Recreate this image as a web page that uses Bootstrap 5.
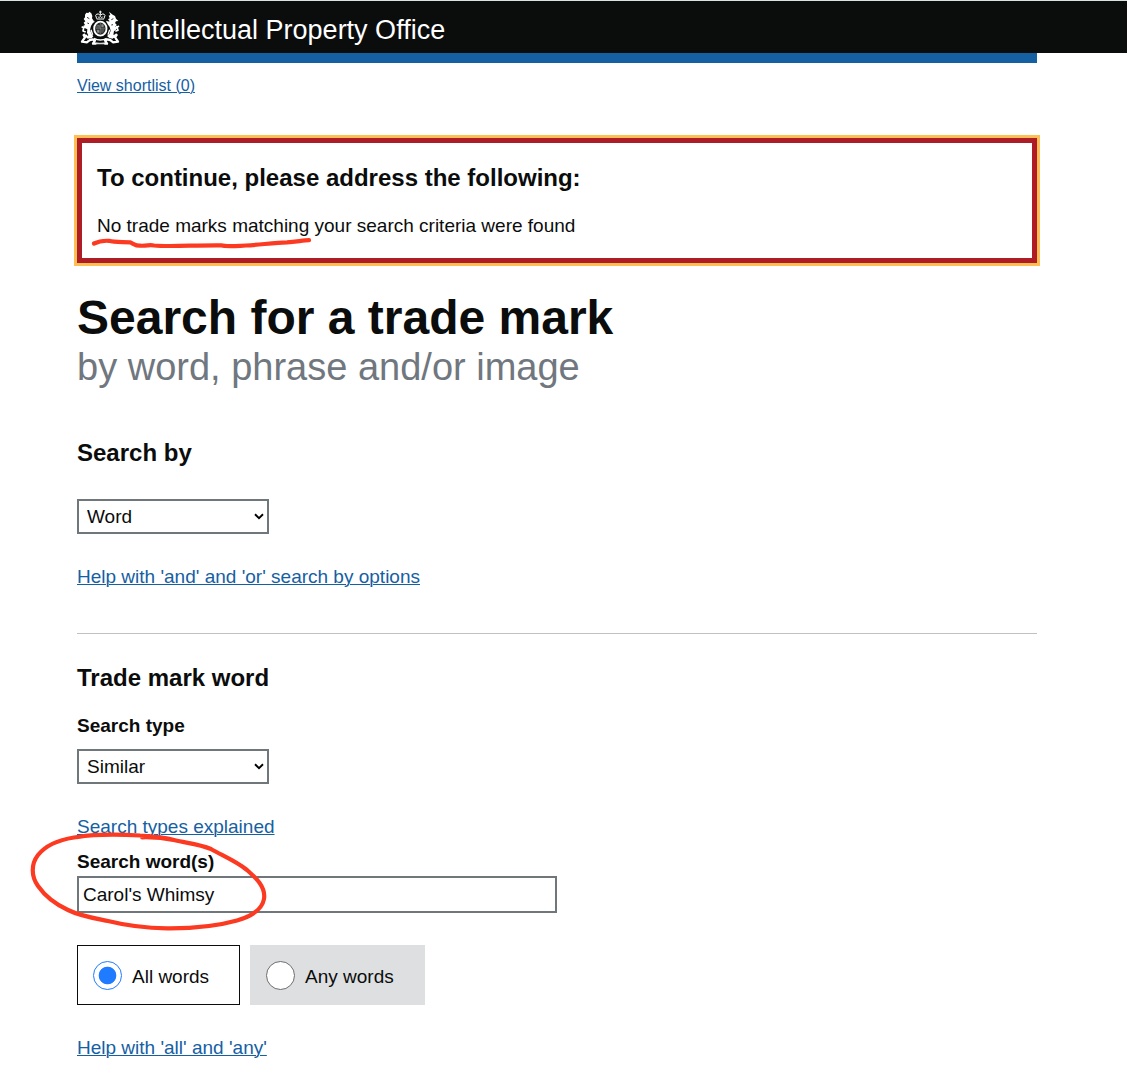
<!DOCTYPE html>
<html lang="en">
<head>
<meta charset="utf-8">
<meta name="viewport" content="width=device-width, initial-scale=1">
<title>Search for a trade mark - Intellectual Property Office</title>
<link href="https://cdn.jsdelivr.net/npm/bootstrap@5.3.0/dist/css/bootstrap.min.css" rel="stylesheet">
<style>
body{font-family:"Liberation Sans",Arial,sans-serif;font-size:19px;line-height:24px;color:#0b0c0c;background:#fff;height:1082px;overflow:hidden}
.ipo-wrap{width:960px;margin-left:77px}
.ipo-head{height:53px;background:#0b0c0c;border-top:1px solid #dbe3de}
.ipo-name{font-size:27px;line-height:32px;margin:13px 0 0 8px}
.crest{margin:9px 0 0 3px;width:41px;height:36px;flex:none}
.ipo-bar{height:10px;background:#1560a3}
.ipo-link{display:table;color:#1560a3;text-decoration:underline;text-decoration-thickness:1px;text-underline-offset:1px;margin-top:31px}
.ipo-link.shortlist{font-size:16px;line-height:20px;margin-top:13px}
.err-box{margin-top:42px;height:125px;border:5px solid #ae1c25;outline:3px solid #ffbf54;padding:21px 15px 0}
.err-text{margin:22px 0 0}
.h-md{font-size:24px;line-height:28px;font-weight:700;margin:30px 0 0}
.err-box .h-md{margin-top:0}
.h-xl{font-size:48px;line-height:50px;font-weight:700;margin:30px 0 0}
.h-sub{display:block;font-size:38px;line-height:46px;font-weight:400;color:#70777e;margin-top:1px}
.h-xl + .h-md{margin-top:49px}
.sel-box{display:block;width:192px;height:35px;border:2px solid #6f777b;border-radius:0;padding:0 0 0 8px;font-size:19px;line-height:24px;color:#0b0c0c;background:#fff;background-image:url("data:image/svg+xml,%3Csvg xmlns='http://www.w3.org/2000/svg' width='10' height='7'%3E%3Cpath d='M1 1.2 5 5.1 9 1.2' fill='none' stroke='%23000' stroke-width='1.9'/%3E%3C/svg%3E");background-repeat:no-repeat;background-position:175px 12px;background-size:10px 7px}
.h-md + .sel-box{margin-top:32px}
.lbl + .sel-box{margin-top:11px}
.rule{height:1px;background:#bfc1c3;margin-top:44px}
.lbl{display:block;font-weight:700;margin-top:22px}
.ipo-link + .lbl{margin-top:11px}
.txt-box{width:480px;height:37px;border:2px solid #6f777b;border-radius:0;padding:0 4px;font-size:19px;line-height:24px;color:#0b0c0c;display:block;margin-top:2px}
.opts{margin-top:32px;gap:10px}
.opt{height:60px;width:175px;background:#dedfe1;border:1px solid #dedfe1;padding:2px 0 0 15px}
.opt input{appearance:none;width:29px;height:29px;border:1px solid #6c6c6c;border-radius:50%;background:#fff;margin:-2px 10px 0 0;flex:none}
.opt span{padding-top:1px}
.opt.on{width:163px;background:#fff;border-color:#0b0c0c}
.opt.on input{border-color:#1f7bff;background:radial-gradient(circle,#1f7bff 8.4px,#fff 9.2px)}
.ink{left:0;top:0;pointer-events:none}
</style>
</head>
<body class="position-relative">
<header class="ipo-head">
  <div class="ipo-wrap d-flex align-items-start text-white">
    <svg class="crest" viewBox="30 27 123 108" aria-hidden="true">
      <!-- lion, unicorn, crown -->
      <path fill="#fff" d="M45 41l4-6 6 1 3-4 6 5 3 8-1 7 5 7-3 8-5 8-3 12 5 12 5 7-5 6-13 1-4-5 7-5-4-8 1-10-8-4-5-6 6-3-4-7 5-4-5-7 4-5z"/>
      <path fill="#fff" d="M117 32l11 9 7 4 3 8 7 7-7 1-3 5 5 5-4 6 8 2-7 8-5 4-2 10 5 7-7 5-10-2-7-6 7-5 4-11-3-11-6-8-3-7 9-2-5-6 5-3-3-8 5-2z"/>
      <g stroke="#fff" fill="none" stroke-linejoin="round">
        <path stroke-width="3" d="M80 53L77 43q2-5 8-4l6 4 6-4q6-1 8 4l-3 10M80 54h22M91 29v14M87 33h8"/>
        <path stroke-width="2" d="M84 46l3 5 4-6 4 6 4-5"/>
        <path stroke-width="5" d="M47 93l-8-3 2-9-6-4M39 81l6-3M136 91l8-3-3-9 6-4M143 79l-5-3"/>
        <path stroke-width="7" d="M52 105q-7 1-12-6M40 100l5 9-9 13 15 2q12-13 24-6l-6 10h42l-6-10q12-7 24 6l15-2-9-13 6-9M129 105q7 1 12-6"/>
        <path stroke-width="4" d="M72 112q19 10 38 0M64 66l9-5M118 66l-9-5M63 86l5 15M119 86l-5 15"/>
      </g>
      <!-- garter and shield -->
      <ellipse cx="91" cy="83" rx="23" ry="26" fill="#0b0c0c"/>
      <ellipse cx="91" cy="83" rx="18.500" ry="21" fill="#292a2a" stroke="#fff" stroke-width="5.500"/>
      <path d="M79 72h11v9H78zM93 84h10l-3 11h-7z" fill="#505151"/>
      <path d="M94 70h7v9h-7zM80 86h8v9h-6z" fill="#858686"/>
      <path d="M91 65v34M77 82h28M82 71l6 6M84 91l5 2" stroke="#a0a1a1" stroke-width="1.500" fill="none"/>
      <path d="M51 49l7 4M52 66l5 2M130 53l-6 3M129 71l-5 1M48 113l8 3M134 113l-8 3M80 122q11 4 22 0M79 130h24" stroke="#0b0c0c" stroke-width="2.500" fill="none"/>
    </svg>
    <div class="ipo-name">Intellectual Property Office</div>
  </div>
</header>
<main class="ipo-wrap">
  <div class="ipo-bar"></div>
  <a href="#" class="ipo-link shortlist">View shortlist (0)</a>

  <section class="err-box" role="alert">
    <h2 class="h-md">To continue, please address the following:</h2>
    <p class="err-text">No trade marks matching your search criteria were found</p>
  </section>

  <h1 class="h-xl">Search for a trade mark<span class="h-sub">by word, phrase and/or image</span></h1>

  <h2 class="h-md">Search by</h2>
  <select class="form-select sel-box" aria-label="Search by"><option>Word</option></select>
  <a href="#" class="ipo-link">Help with 'and' and 'or' search by options</a>
  <div class="rule"></div>

  <h2 class="h-md">Trade mark word</h2>
  <label class="lbl" for="type">Search type</label>
  <select id="type" class="form-select sel-box"><option>Similar</option></select>
  <a href="#" class="ipo-link">Search types explained</a>
  <label class="lbl" for="words">Search word(s)</label>
  <input id="words" class="form-control txt-box" type="text" value="Carol's Whimsy">

  <div class="d-flex opts">
    <label class="opt on d-flex align-items-center"><input type="radio" name="m" checked><span>All words</span></label>
    <label class="opt d-flex align-items-center"><input type="radio" name="m"><span>Any words</span></label>
  </div>
  <a href="#" class="ipo-link">Help with 'all' and 'any'</a>
</main>
<!-- hand-drawn annotations over the form -->
<svg class="ink position-absolute" width="1127" height="1082" viewBox="0 0 1127 1082" fill="none" stroke="#fc3a21" stroke-width="4.200" stroke-linecap="round" stroke-linejoin="round" aria-hidden="true">
  <path d="M94 243.500C98 241.500 104 240.500 109 240.800C114 242.500 123 241.800 130 242.300C134 244 136 246 140 245.700C148 246 149 244.500 154 245.500C170 247 195 245 221 245.300C227 247 238 245.800 246 245.500C260 244.800 275 242.500 287 242.400C296 241.800 303 240.500 309 240.200"/>
  <path d="M142 837.300C152 837 164 838 175 840.300C186 843 199 844 211 849C221 855 236 861 247 870C256 878 266 887 264 899C262 910 249 917 237 920.500C214 927 190 928.500 167 928.300C144 928 128 926 108 921C93 918 80 916 68 910C55 904 45 896 38 886C31 876 31 864 38 855C46 845 58 840 74 837.500C91 834.500 116 834 140 835.500C153 836 166 837.500 175 840.300"/>
</svg>
<script src="https://cdn.jsdelivr.net/npm/bootstrap@5.3.0/dist/js/bootstrap.bundle.min.js"></script>
</body>
</html>
